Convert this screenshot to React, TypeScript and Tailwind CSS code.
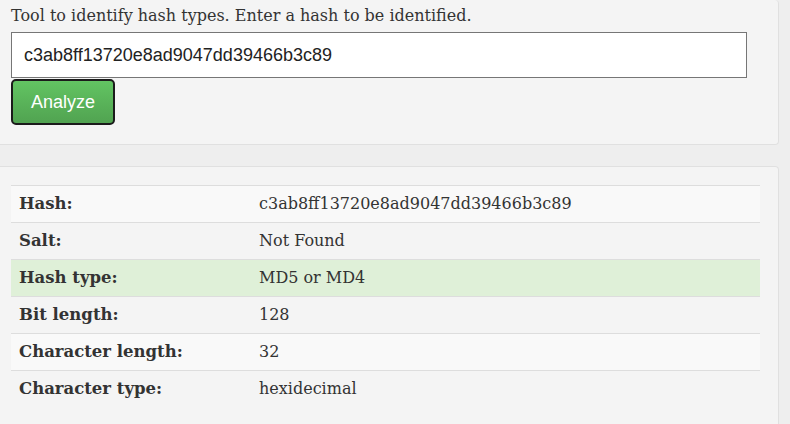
const rows: { label: string; value: string; tone: "odd" | "even" | "success" }[] = [
  { label: "Hash:", value: "c3ab8ff13720e8ad9047dd39466b3c89", tone: "odd" },
  { label: "Salt:", value: "Not Found", tone: "even" },
  { label: "Hash type:", value: "MD5 or MD4", tone: "success" },
  { label: "Bit length:", value: "128", tone: "even" },
  { label: "Character length:", value: "32", tone: "odd" },
  { label: "Character type:", value: "hexidecimal", tone: "even" },
];

const rowBg = {
  odd: "bg-[#f9f9f9]",
  even: "bg-transparent",
  success: "bg-[#dff0d8]",
};

export default function App() {
  return (
    <div className="h-[424px] w-[790px] overflow-hidden bg-[#eeeeee] font-['DejaVu_Serif',Georgia,serif] text-[#333333]">
      {/* Hash input well */}
      <div className="mr-[11px] h-[145px] rounded-r-[4px] border border-l-0 border-t-0 border-[#e0e0e0] bg-[#f4f4f4] pl-[11px] pr-[31px] pt-[5px]">
        <p className="m-0 text-[16px] leading-[21px]">
          Tool to identify hash types. Enter a hash to be identified.
        </p>
        <input
          type="text"
          defaultValue="c3ab8ff13720e8ad9047dd39466b3c89"
          className="mt-[6px] block h-[46px] w-full border border-[#767676] bg-white px-[12px] font-['Liberation_Sans',Arial,sans-serif] text-[18px] text-[#222222] outline-none"
        />
        <button
          type="button"
          className="mt-[1px] h-[46px] w-[104px] rounded-[5px] border-2 border-[#1b1b1b] bg-linear-to-b from-[#62c462] to-[#51a351] font-['Liberation_Sans',Arial,sans-serif] text-[18px] text-white"
        >
          Analyze
        </button>
      </div>

      {/* Results well */}
      <div className="mr-[11px] mt-[21px] h-[300px] rounded-tr-[4px] border border-b-0 border-l-0 border-[#e0e0e0] bg-[#f4f4f4] pl-[11px] pr-[18px] pt-[18px]">
        <table className="w-full border-collapse text-[16px]">
          <tbody>
            {rows.map((r) => (
              <tr key={r.label} className={rowBg[r.tone]}>
                <td className="h-[37px] w-[240px] border-t border-[#dddddd] px-[8px] align-middle text-[16.5px] font-bold">
                  {r.label}
                </td>
                <td className="h-[37px] border-t border-[#dddddd] px-[8px] align-middle">
                  {r.value}
                </td>
              </tr>
            ))}
          </tbody>
        </table>
      </div>
    </div>
  );
}
